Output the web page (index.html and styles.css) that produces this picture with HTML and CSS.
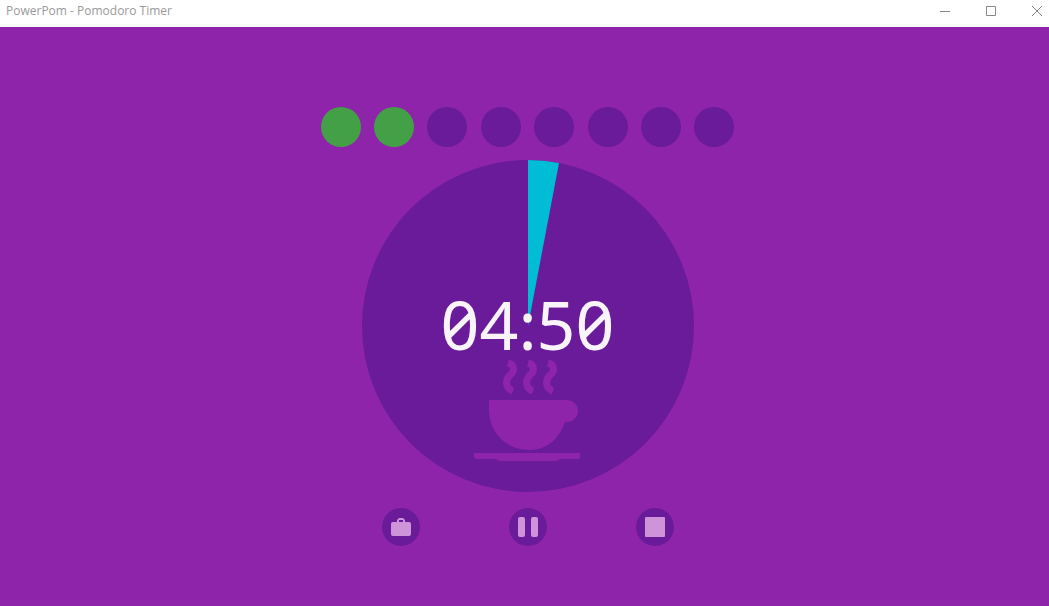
FILE: index.html
```html
<!DOCTYPE html>
<html lang="en">
<head>
<meta charset="utf-8">
<title>PowerPom - Pomodoro Timer</title>
<link rel="stylesheet" href="styles.css">
</head>
<body>

<header class="titlebar">
	<h1 class="title">PowerPom - Pomodoro Timer</h1>
	<div class="winbuttons">
		<button type="button" class="winbutton" aria-label="Minimize">
			<svg width="10" height="10" viewBox="0 0 10 10"><path d="M0 5.5H10"/></svg>
		</button>
		<button type="button" class="winbutton" aria-label="Maximize">
			<svg width="10" height="10" viewBox="0 0 10 10"><path d="M.5 .5H9.5V9.5H.5Z"/></svg>
		</button>
		<button type="button" class="winbutton" aria-label="Close">
			<svg width="10" height="10" viewBox="0 0 10 10"><path d="M0 0L10 10M10 0L0 10"/></svg>
		</button>
	</div>
</header>

<main class="timer">
	<ol class="sessions">
		<li class="dot done"></li>
		<li class="dot done"></li>
		<li class="dot"></li>
		<li class="dot"></li>
		<li class="dot"></li>
		<li class="dot"></li>
		<li class="dot"></li>
		<li class="dot"></li>
	</ol>

	<div class="dial">
		<svg class="face" viewBox="0 0 332 332" aria-hidden="true">
			<circle class="disc" cx="166" cy="166" r="166"/>
			<path class="elapsed" d="M166 166V0Q182 0 197 3Z"/>
			<!-- coffee cup, shown during a break -->
			<g class="steam">
				<path d="M146 203C154 205 152 212 148 215C143 220 143 228 151 231"/>
				<path d="M166 203C174 205 172 212 168 215C163 220 163 228 171 231"/>
				<path d="M186 203C194 205 192 212 188 215C183 220 183 228 191 231"/>
			</g>
			<path class="cup" d="M127 240H205A11 11 0 0 1 205 262H203C197 279 185 290 167 290C144 290 127 272 127 250Z"/>
			<path class="cup" d="M112 293H218V298L216 299H198L195 301H137L134 299H115Q112 299 112 296Z"/>
		</svg>
		<time class="clock" datetime="PT4M50S">04:50</time>
	</div>

	<div class="controls">
		<button type="button" class="control" aria-label="Work">
			<svg width="22" height="20" viewBox="0 0 22 20">
				<path d="M3 5H7V3L9 1H13L15 3V5H19Q21 5 21 7V17Q21 19 19 19H3Q1 19 1 17V7Q1 5 3 5ZM9 5H13V3H9Z"/>
			</svg>
		</button>
		<button type="button" class="control" aria-label="Pause">
			<svg width="20" height="20" viewBox="0 0 20 20">
				<rect width="7" height="20" rx="2"/>
				<rect x="13" width="7" height="20" rx="2"/>
			</svg>
		</button>
		<button type="button" class="control" aria-label="Stop">
			<svg width="20" height="20" viewBox="0 0 20 20">
				<rect width="20" height="20" rx="1"/>
			</svg>
		</button>
	</div>
</main>

</body>
</html>
```

FILE: styles.css
```css
body {
	margin: 0;
	min-height: 100vh;
	display: flex;
	flex-direction: column;
	background-color: #8e24aa;
	font-family: "Noto Sans", sans-serif;
}

button {
	border: none;
	padding: 0;
	display: flex;
	align-items: center;
	justify-content: center;
	cursor: pointer;
}

.titlebar {
	display: flex;
	justify-content: space-between;
	background-color: white;
	padding: 0 0 5px 6px;
}

.title {
	margin: 0;
	font-family: "Open Sans", sans-serif;
	font-size: 12px;
	line-height: 22px;
	font-weight: normal;
	color: #999;
}

.winbuttons {
	display: flex;
	gap: 22px;
}

.winbutton {
	width: 24px;
	height: 22px;
	background: none;
}

.winbutton path {
	fill: none;
	stroke: #888;
}

.timer {
	display: flex;
	flex-direction: column;
	align-items: center;
	padding: 80px 0 60px 6px;
}

.sessions {
	display: flex;
	justify-content: space-between;
	width: 414px;
	max-width: 100%;
	margin: 0 0 13px;
	padding: 0;
	list-style: none;
}

.dot {
	width: 40px;
	height: 40px;
	border-radius: 50%;
	background-color: #6a1b9a;
}

.done {
	background-color: #43a047;
}

/* face and clock share one grid cell */
.dial {
	display: grid;
	place-items: center;
	margin-bottom: 16px;
}

.face,
.clock {
	grid-area: 1 / 1;
}

.face {
	width: 332px;
}

.disc {
	fill: #6a1b9a;
}

.elapsed {
	fill: #00bcd4;
}

.cup {
	fill: #8e24aa;
}

.steam {
	fill: none;
	stroke: #8e24aa;
	stroke-width: 7;
}

.clock {
	padding-bottom: 4px;
	font-size: 68px;
	line-height: 80px;
	font-variant-numeric: slashed-zero;
	color: #f8f4fa;
}

.controls {
	display: flex;
	justify-content: space-between;
	width: 292px;
	max-width: 100%;
}

.control {
	width: 38px;
	height: 38px;
	border-radius: 50%;
	background-color: #6a1b9a;
}

.control svg {
	fill: #ce93d8;
	fill-rule: evenodd;
}
```
